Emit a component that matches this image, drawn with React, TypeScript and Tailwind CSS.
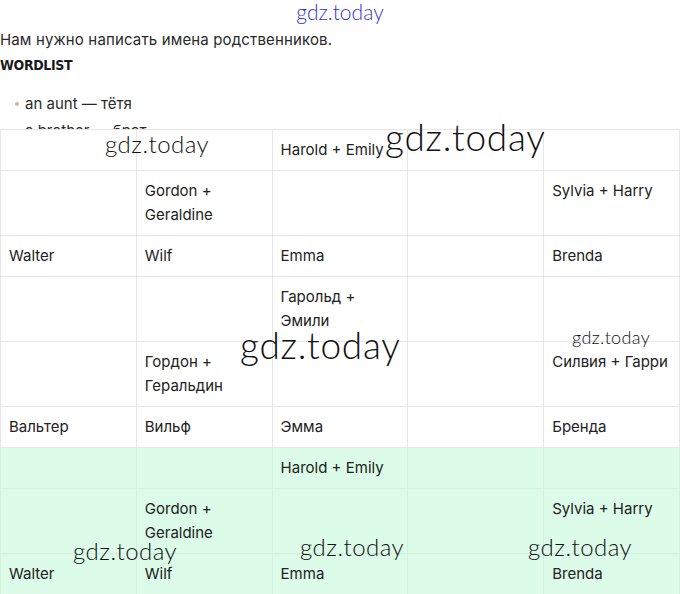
const rows: string[][] = [
  ["", "", "Harold + Emily", "", ""],
  ["", "Gordon + Geraldine", "", "", "Sylvia + Harry"],
  ["Walter", "Wilf", "Emma", "", "Brenda"],
  ["", "", "Гарольд + Эмили", "", ""],
  ["", "Гордон + Геральдин", "", "", "Силвия + Гарри"],
  ["Вальтер", "Вильф", "Эмма", "", "Бренда"],
];

const green: string[][] = [
  ["", "", "Harold + Emily", "", ""],
  ["", "Gordon + Geraldine", "", "", "Sylvia + Harry"],
  ["Walter", "Wilf", "Emma", "", "Brenda"],
];

// watermark overlays
function Mark({ className }: { className: string }) {
  return (
    <span
      className={"absolute font-light text-[#111] whitespace-nowrap pointer-events-none tracking-[0.02em] " + className}
      style={{ fontFamily: "Lato, 'DejaVu Sans', sans-serif" }}
    >
      gdz.today
    </span>
  );
}

export default function App() {
  return (
    <div
      className="relative w-[680px] h-[594px] overflow-hidden bg-white text-[#222]"
      style={{ fontFamily: "Inter, 'Noto Sans', sans-serif" }}
    >
      <div className="h-[129px] overflow-hidden">
        <div className="flex justify-center h-[30px]">
          <span className="text-[21px] leading-[24px] text-[#3434d4] font-light" style={{ fontFamily: "Lato, sans-serif" }}>
            gdz.today
          </span>
        </div>
        <p className="text-[15px] leading-[20px] text-[#2a2a2a] tracking-[0.01em]">Нам нужно написать имена родственников.</p>
        <p
          className="mt-[5px] text-[14px] leading-[20px] font-bold text-[#1a1a1a] tracking-tight"
          style={{ fontFamily: "'Liberation Sans Narrow', 'DejaVu Sans Condensed', 'Liberation Sans', sans-serif" }}
        >
          WORDLIST
        </p>
        <ul className="mt-[15px] pl-[15px] text-[15px] leading-[27px] text-[#2a2a2a]">
          <li className="flex items-center gap-[6px]">
            <span className="w-[4px] h-[4px] rounded-full bg-[#c9b99a]" />
            an aunt — тётя
          </li>
          <li className="flex items-center gap-[6px]">
            <span className="w-[4px] h-[4px] rounded-full bg-[#c9b99a]" />
            a brother — брат
          </li>
        </ul>
      </div>

      <table className="w-[680px] border-collapse table-fixed text-[15px] leading-6">
        <tbody>
          {rows.map((r, i) => (
            <tr key={i} className="bg-white">
              {r.map((c, j) => (
                <td key={j} className="border border-[#e6e6e6] pl-2 pr-[9px] py-2 align-top">
                  {c}
                </td>
              ))}
            </tr>
          ))}
          {green.map((r, i) => (
            <tr key={"g" + i} className="bg-[#dcfbe8]">
              {r.map((c, j) => (
                <td key={j} className="border border-[#d6eedd] pl-2 pr-[9px] py-2 align-top">
                  {c}
                </td>
              ))}
            </tr>
          ))}
        </tbody>
      </table>

      <Mark className="left-[105px] top-[126px] text-[24px]" />
      <Mark className="left-[385px] top-[109px] text-[37px]" />
      <Mark className="left-[240px] top-[317px] text-[37px]" />
      <Mark className="left-[572px] top-[324px] text-[18px]" />
      <Mark className="left-[73px] top-[533px] text-[24px]" />
      <Mark className="left-[300px] top-[529px] text-[24px]" />
      <Mark className="left-[528px] top-[529px] text-[24px]" />
    </div>
  );
}
